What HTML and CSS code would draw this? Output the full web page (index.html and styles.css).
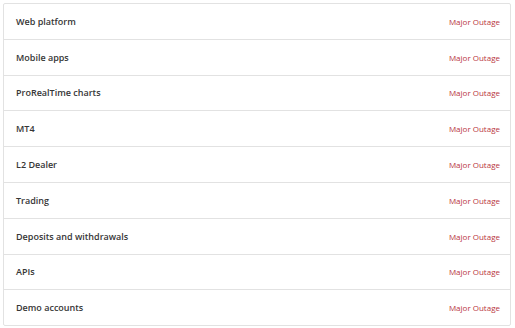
FILE: index.html
```html
<!DOCTYPE html>
<html lang="en">
<head>
<meta charset="UTF-8" />
<meta name="viewport" content="width=device-width, initial-scale=1.0" />
<title>System status</title>
<link rel="stylesheet" href="styles.css">
</head>
<body>
  <ul class="components">
    <li class="component"><span class="name">Web platform</span><span class="status">Major Outage</span></li>
    <li class="component"><span class="name">Mobile apps</span><span class="status">Major Outage</span></li>
    <li class="component"><span class="name">ProRealTime charts</span><span class="status">Major Outage</span></li>
    <li class="component"><span class="name">MT4</span><span class="status">Major Outage</span></li>
    <li class="component"><span class="name">L2 Dealer</span><span class="status">Major Outage</span></li>
    <li class="component"><span class="name">Trading</span><span class="status">Major Outage</span></li>
    <li class="component"><span class="name">Deposits and withdrawals</span><span class="status">Major Outage</span></li>
    <li class="component"><span class="name">APIs</span><span class="status">Major Outage</span></li>
    <li class="component"><span class="name">Demo accounts</span><span class="status">Major Outage</span></li>
  </ul>
</body>
</html>
```

FILE: styles.css
```css
html {
  margin: 0;
  padding: 0;
  box-sizing: border-box;
}

body {
  margin: 0;
  padding: 3px 4px 0 3px;
  background-color: #ffffff;
  font-family: "Open Sans", Lato, Arial, sans-serif;
}

.components {
  list-style: none;
  margin: 0;
  padding: 0;
  border: 1px solid #e2e2e2;
  border-radius: 2px;
}

.component {
  display: flex;
  justify-content: space-between;
  align-items: center;
  box-sizing: border-box;
  height: 35.8px;
  padding: 0 10px 0 12px;
  border-top: 1px solid #e2e2e2;
}

.component:first-child {
  border-top: none;
  height: 34.8px;
}

.name {
  font-size: 9px;
  font-weight: 600;
  color: #363636;
}

.status {
  font-size: 8px;
  color: #b8343c;
}
```
